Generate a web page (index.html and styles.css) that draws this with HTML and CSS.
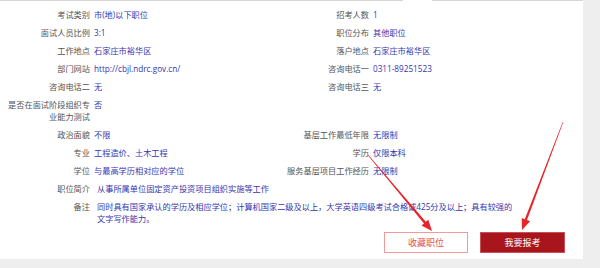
FILE: index.html
```html
<!DOCTYPE html>
<html lang="zh-CN">
<head>
    <meta charset="UTF-8">
    <meta name="viewport" content="width=device-width, initial-scale=1.0">
    <title>职位详情</title>
    <link rel="stylesheet" href="styles.css">
</head>
<body>

<div class="panel">
    <div class="tabline">
        <span class="seg seg-left"></span>
        <span class="seg seg-gap"></span>
        <span class="seg seg-right"></span>
    </div>

    <div class="info">
        <div class="lbl">考试类别</div><div class="val">市(地)以下职位</div>
        <div class="lbl">招考人数</div><div class="val">1</div>

        <div class="lbl">面试人员比例</div><div class="val">3:1</div>
        <div class="lbl">职位分布</div><div class="val">其他职位</div>

        <div class="lbl">工作地点</div><div class="val">石家庄市裕华区</div>
        <div class="lbl">落户地点</div><div class="val">石家庄市裕华区</div>

        <div class="lbl">部门网站</div><div class="val">http://cbjl.ndrc.gov.cn/</div>
        <div class="lbl">咨询电话一</div><div class="val">0311-89251523</div>

        <div class="lbl">咨询电话二</div><div class="val">无</div>
        <div class="lbl">咨询电话三</div><div class="val">无</div>

        <div class="lbl">是否在面试阶段组织专业能力测试</div><div class="val">否</div>
        <div class="lbl"></div><div class="val"></div>

        <div class="lbl">政治面貌</div><div class="val">不限</div>
        <div class="lbl">基层工作最低年限</div><div class="val">无限制</div>

        <div class="lbl">专业</div><div class="val">工程造价、土木工程</div>
        <div class="lbl">学历</div><div class="val">仅限本科</div>

        <div class="lbl">学位</div><div class="val">与最高学历相对应的学位</div>
        <div class="lbl">服务基层项目工作经历</div><div class="val">无限制</div>

        <div class="lbl">职位简介</div><div class="val wide">从事所属单位固定资产投资项目组织实施等工作</div>

        <div class="lbl">备注</div><div class="val wide">同时具有国家承认的学历及相应学位；计算机国家二级及以上，大学英语四级考试合格或425分及以上；具有较强的文字写作能力。</div>
    </div>

    <div class="actions">
        <a class="btn btn-fav" href="#">收藏职位</a>
        <a class="btn btn-apply" href="#">我要报考</a>
    </div>

    <!-- 标注箭头 -->
    <svg class="arrows" width="600" height="268" viewBox="0 0 600 268">
        <polygon points="367.8,155.2 424.0,223.4 421.5,225.5 432,231 428.3,219.7 425.8,221.8 368.2,154.8" fill="#e8242a"/>
        <polygon points="562.7,121.9 524.8,219.3 521.7,218.1 522,230 530.1,221.3 527.0,220.1 563.3,122.1" fill="#e8242a"/>
    </svg>
</div>

</body>
</html>
```

FILE: styles.css
```css
body {
    margin: 0;
    background-color: #eeeeee;
    font-family: "Open Sans", "Noto Sans CJK SC", sans-serif;
    font-size: 8.2px;
    line-height: 12px;
}
.panel {
    position: relative;
    width: 583px;
    height: 259px;
    background-color: #fff;
}
.tabline {
    display: flex;
    height: 1px;
}
.seg-left {
    width: 403px;
    background-color: #d6d6d6;
}
.seg-gap {
    width: 29px;
}
.seg-right {
    flex: 1;
    background-color: #d6d6d6;
}
.info {
    display: grid;
    grid-template-columns: 82px 189px 82px 1fr;
    column-gap: 4px;
    padding: 5px 0 0 8px;
}
.lbl {
    color: #555;
    text-align: right;
    padding: 3px 0;
}
.val {
    color: #3535b0;
    padding: 3px 0;
}
.wide {
    grid-column: 2 / 5;
    padding-left: 3px;
    padding-right: 68px;
}
.actions {
    display: flex;
    justify-content: flex-end;
    gap: 12px;
    padding-right: 18px;
    margin-top: 4px;
}
.btn {
    display: flex;
    align-items: center;
    justify-content: center;
    height: 21px;
    box-sizing: border-box;
    font-size: 9px;
    text-decoration: none;
}
.btn-fav {
    width: 84px;
    border: 1px solid #f29a9a;
    color: #e05252;
    background-color: #fff;
}
.btn-apply {
    width: 85px;
    border: 1px solid #c65056;
    color: #fff;
    background-color: #a8151c;
}
.arrows {
    position: absolute;
    left: 0;
    top: 0;
    pointer-events: none;
}
```
